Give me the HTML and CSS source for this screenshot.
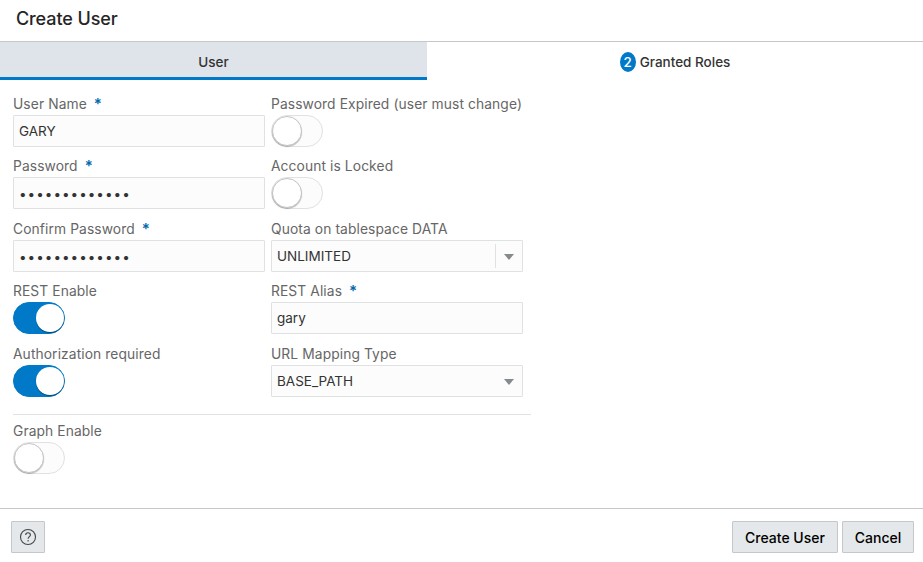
FILE: index.html
```html
<!DOCTYPE html>
<html lang="en">
<head>
<meta charset="utf-8">
<title>Create User</title>
<link rel="stylesheet" href="styles.css">
</head>
<body>
<main class="dialog">
  <header class="header"><h1>Create User</h1></header>
  <nav class="tabs">
    <div class="tab active">User</div>
    <div class="tab"><span class="badge">2</span><span>Granted Roles</span></div>
  </nav>
  <section class="form">
    <div class="fields">
      <div class="field"><label>User Name<span class="star">*</span></label><div class="input"><span class="w-gary">GARY</span></div></div>
      <div class="field"><label class="w-expired">Password Expired (user must change)</label><div class="switch"><i></i></div></div>
      <div class="field"><label>Password<span class="star">*</span></label><div class="input dots">•••••••••••••</div></div>
      <div class="field"><label>Account is Locked</label><div class="switch"><i></i></div></div>
      <div class="field"><label>Confirm Password<span class="star">*</span></label><div class="input dots">•••••••••••••</div></div>
      <div class="field"><label>Quota on tablespace DATA</label><div class="input select"><span>UNLIMITED</span><span class="arrow split"><svg width="10" height="6"><path d="M0 0H10L5 6Z"/></svg></span></div></div>
      <div class="field"><label>REST Enable</label><div class="switch on"><i></i></div></div>
      <div class="field"><label>REST Alias<span class="star">*</span></label><div class="input">gary</div></div>
      <div class="field"><label>Authorization required</label><div class="switch on"><i></i></div></div>
      <div class="field"><label>URL Mapping Type</label><div class="input select"><span>BASE_PATH</span><span class="arrow"><svg width="10" height="6"><path d="M0 0H10L5 6Z"/></svg></span></div></div>
    </div>
    <div class="graph">
      <div class="field"><label>Graph Enable</label><div class="switch"><i></i></div></div>
    </div>
  </section>
  <footer class="footer">
    <button class="btn help" aria-label="Help"><svg width="18" height="18" viewBox="0 0 18 18"><circle cx="9" cy="9" r="7.5"/><path d="M6.7 7.1C6.7 5.6 7.7 4.8 9 4.8S11.4 5.6 11.4 6.9C11.4 8.6 9.1 8.7 9.1 10.8"/><path d="M9.1 12.1V13.4"/></svg></button>
    <button class="btn create">Create User</button>
    <button class="btn cancel">Cancel</button>
  </footer>
</main>
</body>
</html>
```
FILE: styles.css
```css
* { box-sizing: border-box; }
body {
  margin: 0;
  background: #fff;
  color: #333;
  font: 14px/20px Inter, "Liberation Sans", sans-serif;
}
.dialog { display: flex; flex-direction: column; height: 562px; overflow: hidden; }
.header { height: 42px; flex: none; padding: 7px 16px 0; border-bottom: 1px solid #c4c8cb; }
h1 { margin: 0; font-size: 18px; line-height: 24px; font-weight: 500; letter-spacing: -0.1px; color: #252525; }
.tabs { display: flex; height: 38px; flex: none; }
.tab { flex: 1; display: flex; align-items: center; justify-content: center; gap: 4px; padding-top: 2px; font-size: 13.5px; font-weight: 500; }
.tab.active { flex: none; width: 427px; padding-top: 4px; background: #dfe3ea; border-bottom: 3px solid #007ac8; }
.badge { width: 16px; height: 20px; border-radius: 50%; background: #007ac8; color: #fff; text-align: center; }
.form { flex: 1; padding: 13px 13px 0; }
.fields {
  display: grid;
  grid-template-columns: 252px 252px;
  grid-template-rows: 62px 63px 62px 63px 62px;
  column-gap: 6px;
}
label { display: flex; height: 22px; align-items: center; color: #666; font-size: 13.8px; letter-spacing: 0.1px; }
.star { margin: 0 0 1px 7px; color: #0067ad; font-size: 15px; font-weight: 600; }
.input {
  display: flex;
  align-items: center;
  height: 32px;
  padding: 0 5px;
  background: #fcfcfc;
  border: 1px solid #dfe1e2;
  border-radius: 1px;
  font-size: 13.5px;
}
.dots { padding-top: 2px; letter-spacing: 1px; }
.select { justify-content: space-between; padding-right: 0; }
.arrow { display: flex; width: 27px; height: 24px; align-items: center; justify-content: center; padding-top: 1px; }
.split { border-left: 1px solid #dfe1e2; }
.arrow path { fill: #858a8d; }
.switch { display: flex; width: 52px; height: 32px; border: 1px solid #dfe1e2; border-radius: 16px; background: #fcfcfc; }
.switch i { width: 30px; height: 30px; border: 1px solid #c4c4c4; border-radius: 50%; background: #fff; box-shadow: 0 1px 1px rgba(0,0,0,.25); }
.switch.on { justify-content: flex-end; align-items: center; background: #007ac8; border-color: #007ac8; }
.switch.on i { width: 28px; height: 28px; border: 0; box-shadow: 0 1px 1px rgba(0,0,0,.4); }
.graph { width: 518px; margin-top: 9px; padding-top: 5px; border-top: 1px solid #dfe1e2; }
.footer { display: flex; flex: none; gap: 4px; height: 54px; padding: 12px 9px 0 11px; border-top: 1px solid #c4c8cb; }
.btn {
  display: flex;
  align-items: center;
  justify-content: center;
  height: 32px;
  padding: 2px 0 0;
  background: #e4e8ea;
  border: 1px solid #c4c8cc;
  border-radius: 1px;
  color: #000;
  font: 500 14px/20px Inter, "Liberation Sans", sans-serif;
}
.help { width: 34px; margin-right: auto; padding: 0; }
.help svg { fill: none; stroke: #444; stroke-width: 1.1; }
.create { width: 106px; }
.cancel { width: 72px; }
```
